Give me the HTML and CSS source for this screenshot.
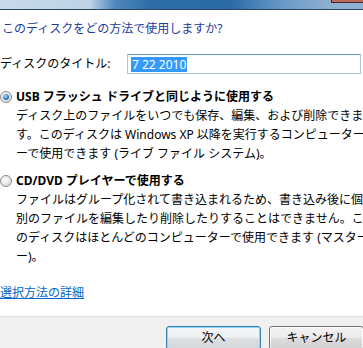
FILE: index.html
```html
<!DOCTYPE html>
<html lang="ja">
<head>
<meta charset="utf-8">
<link rel="stylesheet" href="styles.css">
</head>
<body>
<div class="dialog">
  <div class="titlebar"><span class="close"></span></div>
  <div class="content">
    <p class="instruction">このディスクをどの方法で使用しますか?</p>
    <div class="title-row">
      <span class="label">ディスクのタイトル:</span>
      <div class="textbox"><span class="sel">7 22 2010</span></div>
    </div>
    <div class="option">
      <span class="radio checked"></span>
      <div class="opt-body">
        <div class="opt-title">USB フラッシュ ドライブと同じように使用する</div>
        <div class="desc">ディスク上のファイルをいつでも保存、編集、および削除できま<br>す。このディスクは Windows XP 以降を実行するコンピューター<br>ーで使用できます (ライブ ファイル システム)。</div>
      </div>
    </div>
    <div class="option second">
      <span class="radio"></span>
      <div class="opt-body">
        <div class="opt-title">CD/DVD プレイヤーで使用する</div>
        <div class="desc">ファイルはグループ化されて書き込まれるため、書き込み後に個<br>別のファイルを編集したり削除したりすることはできません。こ<br>のディスクはほとんどのコンピューターで使用できます (マスター<br>ー)。</div>
      </div>
    </div>
    <a class="link" href="#">選択方法の詳細</a>
  </div>
  <div class="footer">
    <button class="btn default">次へ</button>
    <button class="btn">キャンセル</button>
  </div>
</div>
</body>
</html>
```
FILE: styles.css
```css
html, body {
  margin: 0;
  padding: 0;
  width: 363px;
  height: 348px;
  overflow: hidden;
  background: #fff;
}
.dialog {
  width: 420px;
  font-family: "Noto Sans", "Noto Sans CJK JP", sans-serif;
  font-size: 12px;
  color: #000;
}
.titlebar {
  position: relative;
  height: 9px;
  border-bottom: 1px solid #2a4660;
  background: linear-gradient(90deg, #c9dbeb 0px, #bdd2e6 90px, #4f88bb 115px, #2d6ea8 150px, #2a6aa6 230px, #6a9bc7 285px, #8fb0d0 330px, #8fb0d0 420px);
}
.close {
  position: absolute;
  left: 331px;
  top: 0;
  width: 60px;
  height: 2px;
  background: #b86a5c;
  border: 1px solid #4e2620;
  border-top: none;
}
.instruction {
  margin: 9px 0 0 2px;
  line-height: 19px;
  color: #1a3a9c;
  white-space: nowrap;
}
.title-row {
  display: flex;
  align-items: center;
  margin-top: 16px;
  height: 20px;
}
.label {
  width: 127px;
  line-height: 20px;
  white-space: nowrap;
}
.textbox {
  width: 229px;
  height: 18px;
  border: 1px solid #a9c7e2;
  border-top-color: #6a99c2;
  display: flex;
  align-items: center;
  padding-left: 3px;
}
.sel {
  background: #3399ff;
  color: #fff;
  line-height: 15px;
  padding: 0 1px;
  white-space: nowrap;
}
.option {
  display: flex;
  margin-top: 13px;
}
.option.second {
  margin-top: 8px;
}
.radio {
  flex: none;
  box-sizing: border-box;
  width: 12px;
  height: 12px;
  margin: 4px 4px 0 0;
  border-radius: 50%;
  border: 1px solid #8a8c8e;
  background: radial-gradient(circle at 35% 35%, #ffffff 0%, #e8e8e8 50%, #c9c9c9 100%);
  display: flex;
  align-items: center;
  justify-content: center;
}
.radio.checked::after {
  content: "";
  width: 6px;
  height: 6px;
  border-radius: 50%;
  background: radial-gradient(circle at 40% 35%, #bfe9ff 0%, #3b8fd6 45%, #0f4a86 100%);
}
.opt-body {
  line-height: 19px;
  white-space: nowrap;
}
.opt-title {
  font-weight: bold;
}
.link {
  display: inline-block;
  margin-top: 17px;
  line-height: 19px;
  color: #0066cc;
  text-decoration: underline;
}
.footer {
  margin-top: 14px;
  border-top: 1px solid #dfdfdf;
  background: #f0f0f0;
  height: 40px;
  display: flex;
  gap: 8px;
  padding: 9px 0 0 166px;
}
.btn {
  flex: none;
  width: 95px;
  height: 24px;
  border: 1px solid #707070;
  border-radius: 3px;
  background: linear-gradient(#f2f2f2 0%, #ebebeb 50%, #dddddd 51%, #cfcfcf 100%);
  font-family: "Noto Sans", "Noto Sans CJK JP", sans-serif;
  font-size: 12px;
  color: #000;
  padding: 0;
  line-height: 20px;
  box-shadow: inset 0 0 0 1px #fcfcfc;
}
.btn.default {
  border-color: #3c7fb1;
  box-shadow: inset 0 0 0 1px #8fd5f5;
  background: linear-gradient(#f4f6f8 0%, #eceef0 50%, #dee1e3 51%, #d2d6d9 100%);
}
```
